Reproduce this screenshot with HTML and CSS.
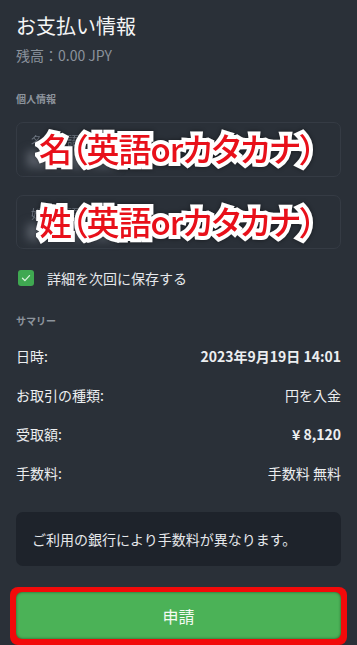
FILE: index.html
```html
<!DOCTYPE html>
<html lang="ja">
<head>
<meta charset="utf-8">
<link rel="stylesheet" href="styles.css">
</head>
<body>
<div class="page">
  <h1 class="title">お支払い情報</h1>
  <div class="balance">残高：0.00 JPY</div>

  <div class="section-label personal">個人情報</div>

  <div class="field">
    <div class="field-label">名（英語orカタカナ）</div>
    <div class="field-value"></div>
    <div class="annot">名（英語orカタカナ）</div>
  </div>
  <div class="field">
    <div class="field-label">姓（英語orカタカナ）</div>
    <div class="field-value"></div>
    <div class="annot">姓（英語orカタカナ）</div>
  </div>

  <label class="save">
    <span class="check"><svg viewBox="0 0 16 16" width="16" height="16"><path d="M4.5 8.2l2.4 2.4 4.6-5" fill="none" stroke="#d9f2dd" stroke-width="1.3" stroke-linecap="round" stroke-linejoin="round"/></svg></span>
    <span class="save-text">詳細を次回に保存する</span>
  </label>

  <div class="section-label summary-label">サマリー</div>

  <div class="summary">
    <div class="row"><span>日時:</span><span class="bold">2023年9月19日 14:01</span></div>
    <div class="row"><span>お取引の種類:</span><span>円を入金</span></div>
    <div class="row"><span>受取額:</span><span class="bold">¥ 8,120</span></div>
    <div class="row"><span>手数料:</span><span>手数料 無料</span></div>
  </div>

  <div class="notice">ご利用の銀行により手数料が異なります。</div>

  <div class="btn-wrap">
    <button class="btn">申請</button>
  </div>
</div>
</body>
</html>
```

FILE: styles.css
```css
* { box-sizing: border-box; }
html, body {
  margin: 0;
  padding: 0;
  background: #2a3038;
}
body {
  font-family: "Noto Sans CJK JP", "Noto Sans", sans-serif;
  color: #e8eaed;
  overflow: hidden;
}
.page {
  width: 357px;
  height: 645px;
  padding: 11px 16px 0 16px;
  display: flex;
  flex-direction: column;
}
.title {
  margin: 0;
  font-size: 20px;
  font-weight: 400;
  line-height: 30px;
  color: #f4f5f6;
}
.balance {
  margin-top: 4px;
  font-size: 14px;
  line-height: 20px;
  color: #8a929c;
}
.section-label {
  font-size: 10px;
  font-weight: 700;
  color: #8d949d;
  line-height: 14px;
}
.personal { margin-top: 27px; }
.field {
  position: relative;
  height: 55px;
  border: 1px solid #353b44;
  border-radius: 7px;
  margin-top: 16px;
  padding: 10px 14px;
}
.field + .field { margin-top: 18px; height: 54px; }
.field-label {
  font-size: 12px;
  color: #6f7782;
  line-height: 16px;
  filter: blur(0.6px);
}
.field-value {
  margin-top: 2px;
  margin-left: -4px;
  width: 90px;
  height: 16px;
  background: #585e68;
  filter: blur(5px);
}
.annot {
  position: absolute;
  left: 22px;
  top: 3px;
  font-size: 33px;
  font-weight: 500;
  line-height: 44px;
  color: #e8101a;
  white-space: nowrap;
  letter-spacing: -1px;
  font-feature-settings: "palt";
  -webkit-text-stroke: 8px #ffffff;
  paint-order: stroke fill;
  filter: drop-shadow(0 0 2px rgba(0,0,0,0.45));
}
.save {
  display: flex;
  align-items: center;
  gap: 13px;
  margin-top: 20px;
  padding-left: 2px;
}
.check {
  width: 16px;
  height: 16px;
  border-radius: 3px;
  background: #3fa851;
  display: flex;
}
.save-text {
  font-size: 14px;
  line-height: 18px;
  color: #e6e8eb;
}
.summary-label { margin-top: 27px; }
.summary {
  margin-top: 18px;
  display: flex;
  flex-direction: column;
  gap: 19px;
}
.row {
  display: flex;
  justify-content: space-between;
  align-items: center;
  font-size: 14px;
  line-height: 20px;
  color: #eceef0;
}
.row .bold { font-weight: 700; }
.notice {
  margin-top: 29px;
  background: #1e232b;
  border-radius: 7px;
  height: 55px;
  padding: 0 16px;
  display: flex;
  align-items: center;
  font-size: 14px;
  color: #e6e8eb;
}
.btn-wrap {
  margin: 21px -6px 0 -6px;
  padding: 5px 6px 6px 6px;
  border: 0;
  background: #f20a0a;
  border-radius: 8px;
}
.btn {
  display: block;
  width: 100%;
  height: 47px;
  border: 0;
  border-radius: 6px;
  background: #4bb257;
  color: #f4fbf4;
  font-family: "Noto Sans CJK JP", sans-serif;
  font-size: 16px;
  box-shadow: inset 0 0 3px rgba(0,0,0,0.5);
}
```
